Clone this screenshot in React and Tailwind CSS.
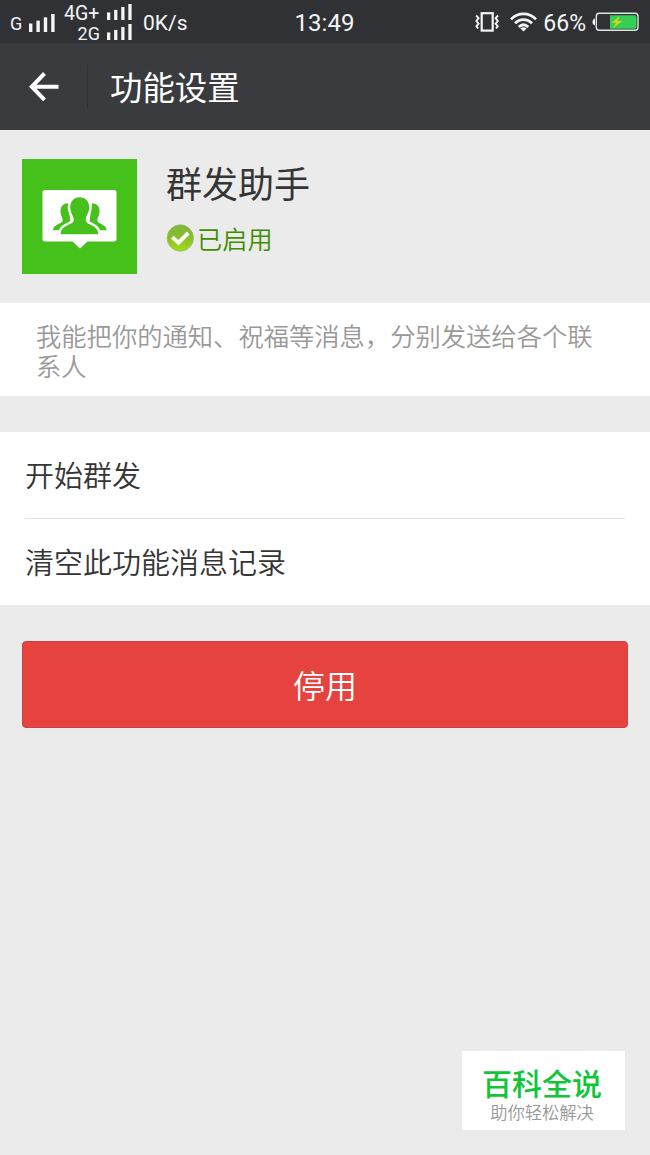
const SignalBars = ({ className }) => (
    <svg className={className} viewBox="0 0 26 19" fill="#f4f4f5" preserveAspectRatio="none">
        <rect x="0" y="10" width="3.4" height="9" />
        <rect x="7.4" y="7" width="3.4" height="12" />
        <rect x="14.8" y="3.5" width="3.4" height="15.5" />
        <rect x="22.2" y="0" width="3.4" height="19" />
    </svg>
);

const VibrateIcon = () => (
    <svg className="w-6 h-5" viewBox="0 0 24 20" fill="none" stroke="#f4f4f5">
        <rect x="6.7" y="1.2" width="11" height="17.4" strokeWidth="2.2" />
        <path d="M1.2 3.5l2.400 2.700L1.400 9l2.200 2.700L1.400 14.200l1.800 2.300M23 3.500l-2.400 2.700L22.800 9l-2.200 2.700 2.200 2.500-1.800 2.300" strokeWidth="1.9" />
    </svg>
);

const WifiIcon = () => (
    <svg className="w-[27px] h-5" viewBox="0 0 27 20" fill="none" stroke="#f4f4f5" strokeWidth="2.7">
        <path d="M1 7.4C8 .1 19 .1 26 7.4" />
        <path d="M5 11.3c5-5 12-5 17 0" />
        <path d="M8.700 15c3-2.800 6.600-2.800 9.600 0" />
        <path d="M10.400 16.500c2-1.700 4.200-1.700 6.200 0L13.500 19.600z" fill="#f4f4f5" stroke="none" />
    </svg>
);

const BatteryIcon = () => (
    <svg className="w-[47px] h-5" viewBox="0 0 47 20">
        <path d="M3 6.500C-.3 7-.3 13 3 13.500z" fill="#f4f4f5" />
        <rect x="4.300" y="1.300" width="41.700" height="17" rx="3" fill="none" stroke="#e4e4e6" strokeWidth="1.400" />
        <path d="M18 3.300h24.500q2 0 2 2v9.400q0 2-2 2H18z" fill="#35cf55" />
        <path d="M27.500 4L19.500 10.800h4.500l-3.200 5.500 9.700-7.200h-5z" fill="#cfd416" />
    </svg>
);

const BackIcon = () => (
    <svg className="w-[30px] h-[30px]" viewBox="0 0 30 30" fill="none" stroke="#fff" strokeWidth="4">
        <path d="M29.500 14.700H3M15.500 1.500L2.800 14.700l12.700 13.200" />
    </svg>
);

const GroupIcon = () => (
    <svg className="w-[115px] h-[115px] shrink-0" viewBox="0 0 115 115">
        <rect width="115" height="115" fill="#46c01b" />
        <path d="M23 31h69q2.500 0 2.500 2.500V80q0 2.500-2.500 2.500H65.500L58 89.500l-7.500-7H23q-2.500 0-2.500-2.500V33.500Q20.500 31 23 31z" fill="#fff" />
        {/* people at the back, then the front one with a white outline */}
        <path d="M46 44.300c-5.500.2-8 4.200-7.500 9 .3 3.700 2.500 5.700 2.200 8.200-.5 3.800-9.700 3.500-9.700 9.700h7c2-3.500 10-4 10.500-8.700zM70 44.300c5.500.2 8 4.200 7.500 9-.3 3.700-2.500 5.700-2.200 8.200.5 3.800 9.200 3.500 9.200 9.700h-7c-2-3.500-9.500-4-10-8.700z" fill="#46c01b" />
        <path
            d="M57.700 38.300c-6 0-9.700 4.500-9.500 10.700.2 5 3.500 8 3.500 12 0 5.500-13 4.300-13 14.300h37.600c0-10-12.600-8.800-12.600-14.300 0-4 3.300-7 3.500-12 .2-6.200-3.500-10.700-9.500-10.700z"
            fill="#46c01b"
            stroke="#fff"
            strokeWidth="5"
            paintOrder="stroke"
        />
    </svg>
);

const EnabledIcon = () => (
    <svg className="w-7 h-7" viewBox="0 0 28 28">
        <defs>
            <linearGradient id="enabled" x1="0" y1="0" x2="0" y2="1">
                <stop offset="0" stopColor="#82b545" />
                <stop offset=".5" stopColor="#86bf25" />
                <stop offset="1" stopColor="#a4dc1c" />
            </linearGradient>
        </defs>
        <circle cx="14.300" cy="14" r="13.200" fill="url(#enabled)" stroke="#96bd5e" strokeWidth=".7" />
        <path d="M6.300 13.200l6.200 5.500L22.300 9" fill="none" stroke="#f7fbef" strokeWidth="4" />
    </svg>
);

const actions = ['开始群发', '清空此功能消息记录'];

const App = () => {
    return (
        <div className="relative w-[650px] h-[1155px] flex flex-col bg-[#ebebeb] text-[#353535] font-['Noto_Sans_CJK_SC',sans-serif] overflow-hidden">
            {/* Status bar */}
            <div className="flex items-center justify-between h-[43px] shrink-0 pl-[10px] pr-[11px] bg-[#303135] text-[#f4f4f5] font-[Roboto,sans-serif]">
                <div className="flex items-center h-full w-[240px]">
                    <span className="w-[19px] text-[18px] leading-none pt-[5px]">G</span>
                    <SignalBars className="w-[26px] h-[18px] mt-[3px]" />
                    <div className="flex flex-col w-[68px] ml-[9px] pt-1">
                        <div className="flex justify-between items-center h-5">
                            <span className="text-[19.500px] leading-5">4G+</span>
                            <SignalBars className="w-[25px] h-4 mb-1" />
                        </div>
                        <div className="flex justify-between items-center h-5">
                            <span className="w-[43px] text-right text-[18px] leading-5 pr-[7px]">2G</span>
                            <SignalBars className="w-[25px] h-4 mb-[3px]" />
                        </div>
                    </div>
                    <span className="ml-[11px] text-[21px] leading-none pt-[3px]">0K/s</span>
                </div>
                <span className="text-[24px] leading-none pt-[3px]">13:49</span>
                <div className="flex items-center justify-end w-[240px]">
                    <VibrateIcon />
                    <span className="ml-[11px]">
                        <WifiIcon />
                    </span>
                    <span className="ml-[6px] text-[23px] leading-none pt-[3px]">66%</span>
                    <span className="ml-[6px]">
                        <BatteryIcon />
                    </span>
                </div>
            </div>

            {/* Header */}
            <div className="flex items-center h-[87px] shrink-0 pl-[29px] bg-[#3a3b3f] text-white">
                <BackIcon />
                <div className="w-px h-11 ml-7 bg-[#303135]"></div>
                <h1 className="ml-[22px] text-[32.400px] leading-none">功能设置</h1>
            </div>

            {/* Feature summary */}
            <div className="flex h-[173px] shrink-0 pl-[22px] pt-[29px]">
                <GroupIcon />
                <div className="flex flex-col ml-[29px]">
                    <h2 className="text-[36px] leading-[46px]">群发助手</h2>
                    <div className="flex items-center mt-[19px] text-[#408d00]">
                        <EnabledIcon />
                        <span className="ml-[3px] -mt-px text-[25.200px] leading-7 font-[350]">已启用</span>
                    </div>
                </div>
            </div>

            <div className="h-[93px] shrink-0 pl-9 pr-12 pt-[17px] bg-white">
                <p className="text-[25.300px] leading-[30px] text-[#999999] font-[350]">我能把你的通知、祝福等消息，分别发送给各个联系人</p>
            </div>

            {/* Actions */}
            <ul className="flex flex-col h-[173px] shrink-0 mt-9 px-[25px] bg-white">
                {actions.map((action, index) => (
                    <li
                        key={action}
                        className={`flex items-center pb-0.5 text-[29px] leading-none font-[350] ${index === 0 ? 'h-[87px] border-b border-[#e0e0e0]' : 'h-[86px]'}`}
                    >
                        {action}
                    </li>
                ))}
            </ul>

            <button className="h-[87px] shrink-0 mt-9 mx-[22px] pb-0.5 rounded-[4px] border border-[#c9404a] bg-[#e64340] text-white text-[32px] leading-none font-[350]">
                停用
            </button>

            {/* Brand badge over the page corner */}
            <div className="absolute right-[25px] bottom-[25px] w-[163px] h-[79px] flex flex-col items-center bg-white whitespace-nowrap">
                <span className="mt-[16px] ml-[-3px] text-[30px] leading-[30px] font-medium text-[#0fc63a]">百科全说</span>
                <span className="mt-[6px] ml-[-3px] text-[17.300px] leading-[18px] font-[350] text-[#999999]">助你轻松解决</span>
            </div>
        </div>
    );
};

export default App;
